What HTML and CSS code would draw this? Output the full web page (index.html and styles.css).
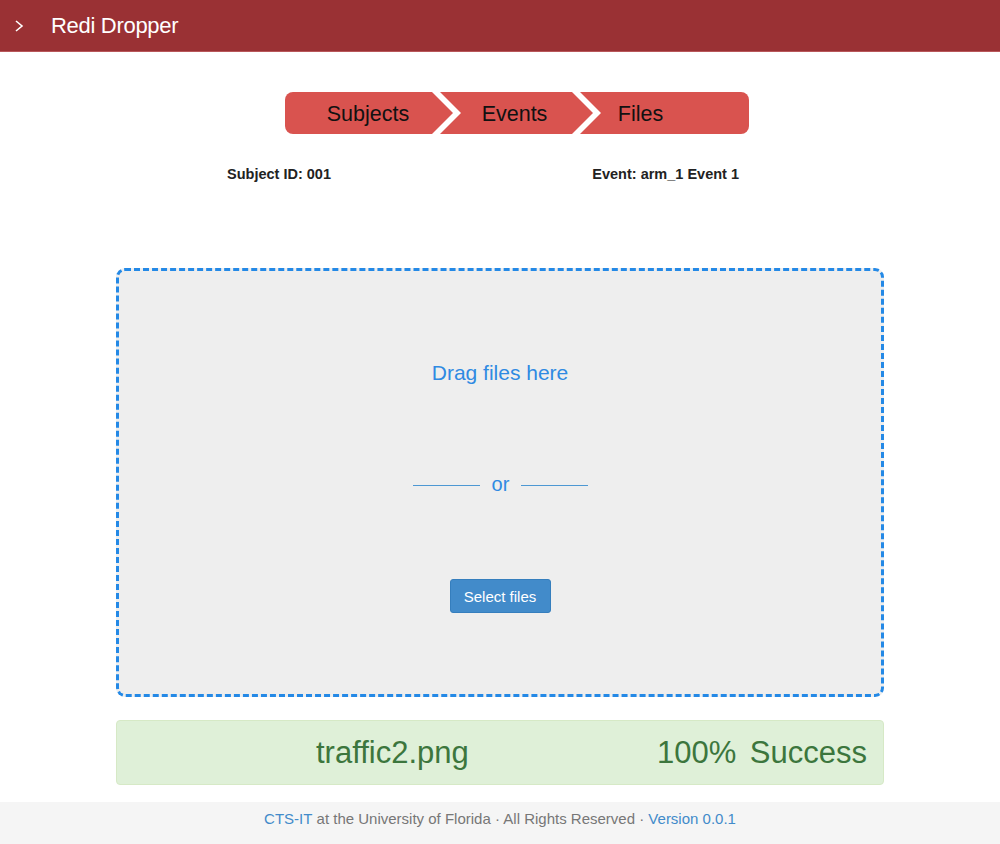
FILE: index.html
```html
<!DOCTYPE html>
<html>
<head>
<meta charset="utf-8">
<title>Redi Dropper</title>
<link rel="stylesheet" href="styles.css">
</head>
<body>
<header class="navbar">
  <svg class="nav-toggle" width="12" height="14" viewBox="0 0 12 14"><path d="M3 2 L9 7 L3 12" fill="none" stroke="#fff" stroke-width="1.6"/></svg>
  <span class="brand">Redi Dropper</span>
</header>
<main class="content">
  <nav class="steps">
    <div class="step step-first">Subjects</div>
    <div class="step step-mid">Events</div>
    <div class="step step-last">Files</div>
  </nav>
  <div class="info">
    <span class="info-item">Subject ID: 001</span>
    <span class="info-item">Event: arm_1 Event 1</span>
  </div>
  <section class="dropzone">
    <div class="drag-text">Drag files here</div>
    <div class="or-row"><span class="or-line"></span><span class="or-text">or</span><span class="or-line"></span></div>
    <button class="btn-select">Select files</button>
  </section>
  <div class="result">
    <span class="file-name">traffic2.png</span>
    <span class="file-status">100% Success</span>
  </div>
</main>
<footer class="footer">
  <a href="#" class="link">CTS-IT</a> at the University of Florida · All Rights Reserved · <a href="#" class="link">Version 0.0.1</a>
</footer>
</body>
</html>
```
FILE: styles.css
```css
* { box-sizing: border-box; }
html, body { margin: 0; padding: 0; }
body {
  font-family: "Liberation Sans", Arial, sans-serif;
  background: #fff;
  color: #333;
  width: 1000px;
  height: 844px;
  display: flex;
  flex-direction: column;
}
.navbar {
  height: 52px;
  background: #9a3134;
  border-bottom: 1px solid #b9575a;
  display: flex;
  align-items: center;
  padding-left: 13px;
}
.nav-toggle { display: block; margin-right: 26px; margin-top: 1px; }
.brand {
  color: #fff;
  font-size: 22px;
  font-weight: 500;
  letter-spacing: -0.3px;
  margin-top: 1px;
}
.content {
  flex: 1;
  display: flex;
  flex-direction: column;
  align-items: center;
}
.steps {
  display: flex;
  margin-top: 40px;
  height: 42px;
  margin-left: 34px;
}
.step {
  background: #d9534f;
  color: #111;
  font-size: 21.5px;
  display: flex;
  align-items: center;
  justify-content: center;
  height: 42px;
  padding-top: 2px;
}
.step-first {
  width: 168px;
  border-radius: 8px 0 0 8px;
  clip-path: polygon(0 0, 147px 0, 168px 50%, 147px 100%, 0 100%);
  padding-right: 2px;
}
.step-mid {
  width: 153px;
  margin-left: -13px;
  clip-path: polygon(0 0, 132px 0, 153px 50%, 132px 100%, 0 100%, 21px 50%);
  padding-right: 4px;
}
.step-last {
  width: 169px;
  margin-left: -13px;
  border-radius: 0 8px 8px 0;
  clip-path: polygon(0 0, 100% 0, 100% 100%, 0 100%, 21px 50%);
  padding-right: 48px;
}
.info {
  width: 512px;
  display: flex;
  justify-content: space-between;
  margin-top: 32px;
  font-size: 14.5px;
  font-weight: bold;
  color: #222;
  margin-left: -34px;
}
.dropzone {
  margin-top: 86px;
  width: 768px;
  height: 429px;
  background: #eeeeee;
  border: 3px dashed #2489e6;
  border-radius: 9px;
  display: flex;
  flex-direction: column;
  align-items: center;
}
.drag-text {
  margin-top: 90px;
  font-size: 21px;
  color: #2f8ae2;
}
.or-row {
  margin-top: 88px;
  display: flex;
  align-items: center;
  gap: 12px;
  margin-left: 1px;
}
.or-line {
  width: 67px;
  height: 1px;
  background: #4d98d3;
  margin-top: 2px;
}
.or-text {
  font-size: 20px;
  color: #2f8ae2;
}
.btn-select {
  margin-top: 83px;
  background: #428bca;
  color: #fff;
  border: 1px solid #357ebd;
  border-radius: 3px;
  font-family: "Liberation Sans", Arial, sans-serif;
  font-size: 15px;
  width: 101px;
  height: 34px;
  padding: 0;
}
.result {
  margin-top: 23px;
  width: 768px;
  height: 65px;
  background: #dff0d8;
  border: 1px solid #d6e9c6;
  border-radius: 4px;
  display: flex;
  align-items: center;
  justify-content: space-between;
  padding: 0 16px 0 199px;
  color: #3c763d;
  font-size: 31px;
}
.file-status { word-spacing: 5px; }
.footer {
  height: 42px;
  background: #f5f5f5;
  display: flex;
  align-items: center;
  justify-content: center;
  font-size: 15px;
  color: #777;
  white-space: pre;
  padding-bottom: 9px;
}
.link { color: #428bca; text-decoration: none; }
```
